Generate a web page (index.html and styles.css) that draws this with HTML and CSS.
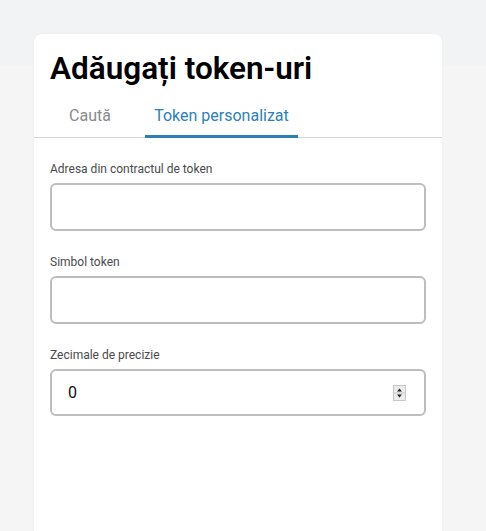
FILE: index.html
```html
<!DOCTYPE html>
<html lang="ro">
<head>
<meta charset="utf-8">
<link rel="stylesheet" href="styles.css">
</head>
<body>
<div class="page">
  <div class="band"></div>
  <section class="card">
    <h1 class="title">Adăugați token-uri</h1>
    <nav class="tabs">
      <div class="tab tab-search">Caută</div>
      <div class="tab tab-active">Token personalizat</div>
    </nav>
    <form class="form">
      <label class="field">
        <span class="label">Adresa din contractul de token</span>
        <span class="input"></span>
      </label>
      <label class="field">
        <span class="label">Simbol token</span>
        <span class="input"></span>
      </label>
      <label class="field">
        <span class="label">Zecimale de precizie</span>
        <span class="input number">
          <span class="value">0</span>
          <span class="spin">
            <svg width="13" height="16" viewBox="0 0 13 16">
              <rect x="0.5" y="0.5" width="12" height="15" fill="#ececec" stroke="#c8c8c8"/>
              <line x1="1" y1="8" x2="12" y2="8" stroke="#c8c8c8"/>
              <path d="M4 6.5 L6.5 3.5 L9 6.5 Z" fill="#222"/>
              <path d="M4 9.5 L6.5 12.5 L9 9.5 Z" fill="#222"/>
            </svg>
          </span>
        </span>
      </label>
    </form>
  </section>
</div>
</body>
</html>
```
FILE: styles.css
```css
* { box-sizing: border-box; }
html, body {
  margin: 0;
  padding: 0;
  height: 100%;
  overflow: hidden;
}
body {
  background: #f5f5f5;
  font-family: Roboto, "Noto Sans", sans-serif;
  color: #000;
}
.page {
  position: relative;
  padding: 34px 44px 0 34px;
  min-height: 100%;
}
.band {
  position: absolute;
  left: 0;
  right: 0;
  top: 0;
  height: 65px;
  background: #f2f3f4;
}
.card {
  position: relative;
  background: #fff;
  border-radius: 8px 8px 0 0;
  width: 408px;
  min-height: 520px;
  box-shadow: 0 0 3px rgba(0,0,0,0.04);
}
.title {
  margin: 0;
  padding: 15px 16px 0 16px;
  font-size: 31.5px;
  font-weight: 600;
  line-height: 40px;
  letter-spacing: 0;
}
.tabs {
  display: flex;
  margin-top: 9px;
  padding-left: 16px;
  border-bottom: 1px solid #d6d6d6;
}
.tab {
  font-size: 16px;
  line-height: 22px;
  padding: 7px 0 8px;
  text-align: center;
  color: #8a8a8a;
}
.tab-search {
  width: 80px;
  margin-right: 15px;
}
.tab-active {
  width: 153px;
  color: #2d7fb7;
  border-bottom: 3px solid #2d7fb7;
  margin-bottom: -1px;
}
.form {
  display: flex;
  flex-direction: column;
  padding: 23px 16px 0;
  gap: 23px;
}
.field {
  display: flex;
  flex-direction: column;
  gap: 6px;
}
.label {
  font-size: 12px;
  line-height: 16px;
  color: #4a4a4a;
}
.input {
  display: flex;
  align-items: center;
  height: 48px;
  border: 2px solid #bdbdbd;
  border-radius: 6px;
  background: #fff;
}
.number {
  height: 47px;
  padding: 0 18px 0 16px;
  justify-content: space-between;
}
.value {
  font-size: 16px;
  color: #111;
}
.spin {
  display: flex;
}
```
